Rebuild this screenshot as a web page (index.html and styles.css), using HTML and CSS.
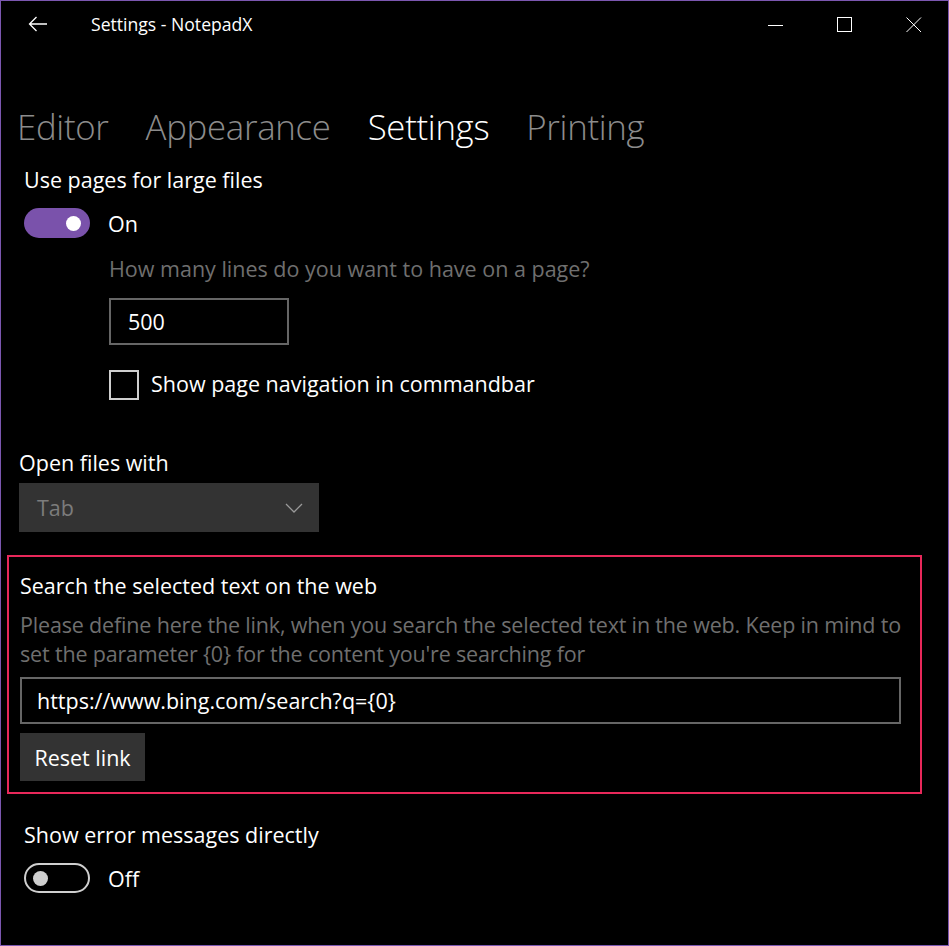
FILE: index.html
```html
<!DOCTYPE html>
<html lang="en">
<head>
<meta charset="utf-8">
<title>Settings - NotepadX</title>
<link rel="stylesheet" href="styles.css">
</head>
<body>
<div class="window">
  <header class="titlebar">
    <div class="back">
      <svg width="20" height="16" viewBox="0 0 20 16"><path d="M19 8H1.5M8.5 1L1.5 8l7 7" fill="none" stroke="#fff" stroke-width="1.3"/></svg>
    </div>
    <div class="title">Settings - NotepadX</div>
    <div class="caption">
      <div class="cbtn"><svg width="16" height="16" viewBox="0 0 16 16"><path d="M0 8.5h15" stroke="#fff" stroke-width="1"/></svg></div>
      <div class="cbtn"><svg width="16" height="16" viewBox="0 0 16 16"><rect x="0.5" y="0.5" width="14" height="14" fill="none" stroke="#fff" stroke-width="1"/></svg></div>
      <div class="cbtn"><svg width="16" height="16" viewBox="0 0 16 16"><path d="M0.5 0.5l14.5 14.5M15 0.5L0.5 15" stroke="#fff" stroke-width="1"/></svg></div>
    </div>
  </header>

  <nav class="tabs">
    <span class="tab">Editor</span>
    <span class="tab">Appearance</span>
    <span class="tab active">Settings</span>
    <span class="tab">Printing</span>
  </nav>

  <main class="content">
    <section class="group indent5">
      <div class="label">Use pages for large files</div>
      <div class="toggle-row">
        <span class="toggle on"><span class="knob"></span></span>
        <span class="toggle-text">On</span>
      </div>
      <div class="sub">
        <div class="hint">How many lines do you want to have on a page?</div>
        <div class="textbox small">500</div>
        <div class="check-row">
          <span class="checkbox"></span>
          <span class="check-text">Show page navigation in commandbar</span>
        </div>
      </div>
    </section>

    <section class="group open-files">
      <div class="label">Open files with</div>
      <div class="dropdown">
        <span>Tab</span>
        <svg width="18" height="10" viewBox="0 0 18 10"><path d="M1 1l8 8 8-8" fill="none" stroke="#9a9a9a" stroke-width="1.3"/></svg>
      </div>
    </section>

    <section class="search-box">
      <div class="label">Search the selected text on the web</div>
      <div class="desc">Please define here the link, when you search the selected text in the web. Keep in mind to set the parameter {0} for the content you're searching for</div>
      <div class="textbox wide">https://www.bing.com/search?q={0}</div>
      <div class="button">Reset link</div>
    </section>

    <section class="group indent5 errors">
      <div class="label">Show error messages directly</div>
      <div class="toggle-row">
        <span class="toggle off"><span class="knob"></span></span>
        <span class="toggle-text">Off</span>
      </div>
    </section>
  </main>
</div>
</body>
</html>
```

FILE: styles.css
```css
* { box-sizing: border-box; }
html, body { margin: 0; padding: 0; background: #000; }
body {
  font-family: "Open Sans", "Noto Sans", sans-serif;
  color: #fff;
}
.window {
  width: 949px;
  height: 946px;
  border: 1px solid #7b57b0;
  overflow: hidden;
  background: #000;
}
.titlebar {
  height: 48px;
  display: flex;
  align-items: center;
}
.back {
  width: 63px;
  padding-left: 27px;
  display: flex;
  align-items: center;
  margin-top: -2px;
}
.title {
  flex: 1;
  font-size: 17.6px;
  padding-left: 27px;
  margin-top: -2px;
}
.caption { display: flex; height: 48px; }
.cbtn {
  width: 69px;
  display: flex;
  align-items: center;
  justify-content: center;
  margin-top: -1px;
}
.tabs {
  display: flex;
  gap: 37px;
  padding: 54px 0 0 16px;
  height: 116px;
}
.tab {
  font-size: 34.8px;
  font-weight: 300;
  color: #8c8c8c;
  line-height: 48px;
  letter-spacing: -0.3px;
}
.tab:first-child { margin-right: 0; }
.tab.active { color: #fff; }
.label { font-size: 21.5px; line-height: 30px; color: #fff; }
.indent5 { padding-left: 23px; }
.toggle-row { display: flex; align-items: center; height: 30px; margin-top: 13px; gap: 18px; }
.toggle {
  width: 66px; height: 30px; border-radius: 15px;
  display: flex; align-items: center;
}
.toggle.on { background: #7a52ab; justify-content: flex-end; padding-right: 9px; }
.toggle.on .knob { width: 15px; height: 15px; border-radius: 50%; background: #fff; }
.toggle.off { border: 2px solid #cfcfcf; padding-left: 7px; }
.toggle.off .knob { width: 15px; height: 15px; border-radius: 50%; background: #cfcfcf; }
.toggle-text { font-size: 21.5px; }
.sub { padding-left: 85px; padding-top: 16px; }
.hint { font-size: 21.5px; line-height: 30px; color: #6f6f6f; }
.textbox {
  border: 2px solid #666;
  height: 47px;
  display: flex; align-items: center;
  font-size: 21.5px;
  padding-left: 17px;
}
.textbox.small { width: 180px; margin-top: 14px; }
.check-row { display: flex; align-items: center; gap: 12px; margin-top: 25px; }
.checkbox { width: 30px; height: 30px; border: 2px solid #cfcfcf; }
.check-text { font-size: 21.5px; line-height: 30px; margin-top: -3px; }
.open-files { padding-left: 18px; margin-top: 48px; }
.dropdown {
  margin-top: 5px;
  width: 300px; height: 49px;
  background: #333;
  display: flex; align-items: center; justify-content: space-between;
  padding: 0 16px 0 18px;
  font-size: 21.5px; color: #7c7c7c;
}
.search-box {
  margin: 23px 0 0 6px;
  width: 915px;
  height: 239px;
  border: 2px solid #e8285a;
  padding: 14px 0 0 11px;
}
.desc { font-size: 21.5px; line-height: 29px; color: #6f6f6f; margin-top: 9px; letter-spacing: -0.17px; }
.textbox.wide { width: 881px; margin-top: 9px; padding-left: 15px; }
.button {
  margin-top: 9px;
  width: 125px; height: 48px;
  background: #333;
  display: flex; align-items: center; justify-content: center;
  font-size: 21.5px;
}
.errors { margin-top: 26px; }
```
